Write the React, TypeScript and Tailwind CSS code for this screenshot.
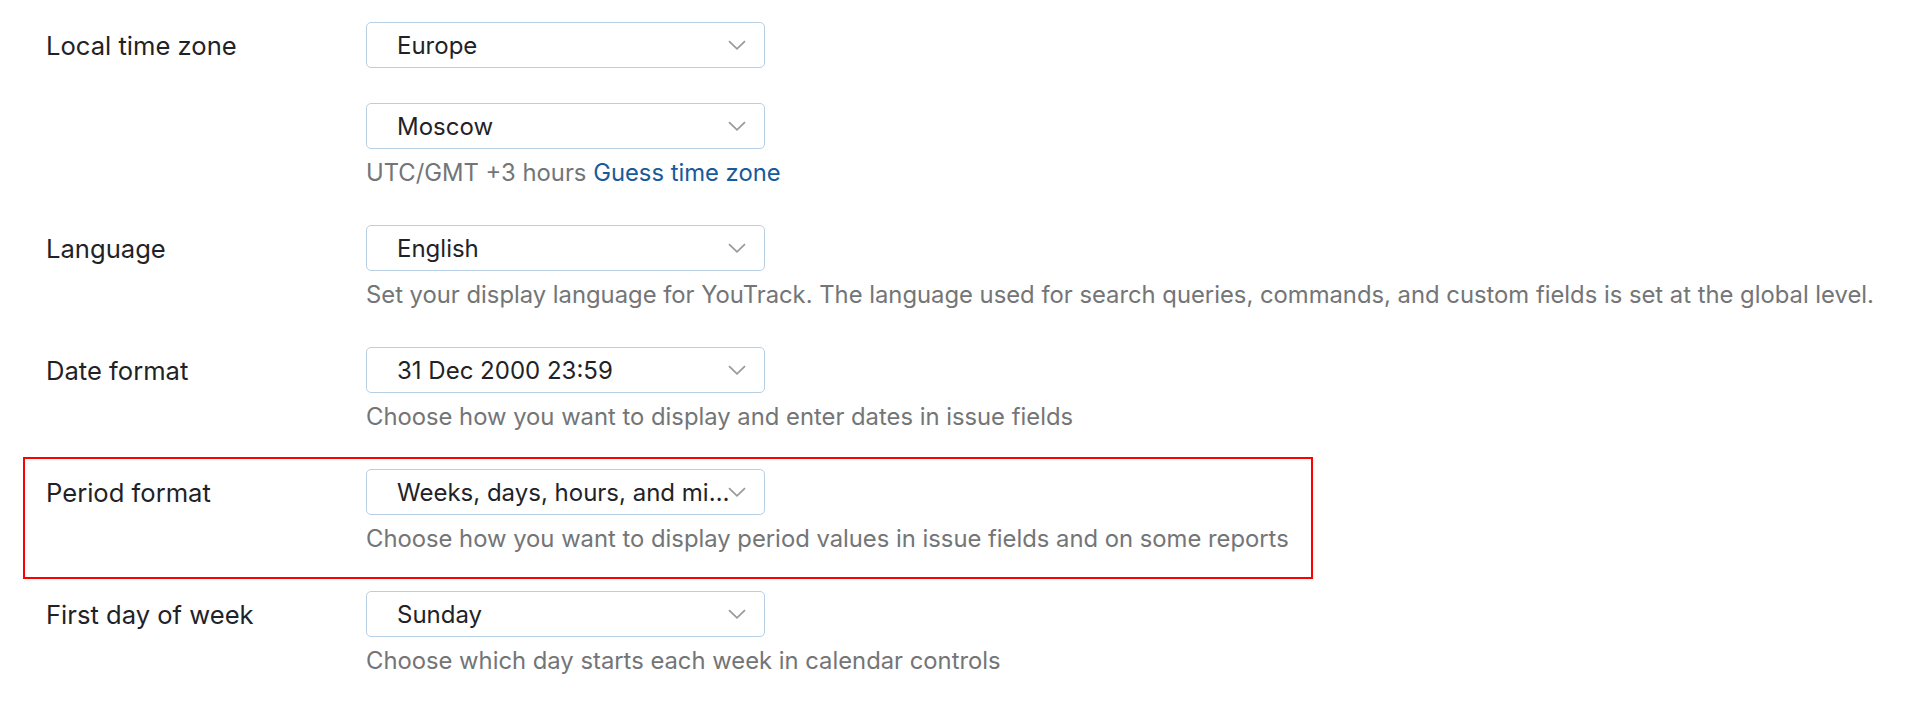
import type { ReactNode } from "react";

// Un selector con chevron a la derecha (estilo YouTrack).
function Select({ value }: { value: string }) {
  return (
    <div className="relative flex h-[46px] w-[399px] items-center rounded-[5px] border-[1.5px] border-[#b7cfe4] bg-white pl-[30px] pr-[34px] pt-[2px] text-[24px] proportional-nums">
      <span className="truncate text-[#1f2328]">{value}</span>
      <svg
        className="absolute right-[18px] top-1/2 -translate-y-1/2"
        width="18"
        height="10"
        viewBox="0 0 18 10"
      >
        <path d="M1 1.2l8 7.6 8-7.6" fill="none" stroke="#999" strokeWidth="1.7" />
      </svg>
    </div>
  );
}

function Row({
  label,
  highlight,
  children,
}: {
  label: string;
  highlight?: boolean;
  children: ReactNode;
}) {
  return (
    <div
      className={`flex w-[1290px] border-2 pb-[18px] pl-[21px] pt-[10px] ${
        highlight ? "border-[#ff0000]" : "border-transparent"
      }`}
    >
      <div className="flex h-[46px] w-[320px] shrink-0 items-center pt-[2px] text-[25.6px] text-[#1f2328]">
        {label}
      </div>
      <div className="flex flex-col">{children}</div>
    </div>
  );
}

function Help({ children }: { children: ReactNode }) {
  return (
    <p className="mt-[4px] whitespace-nowrap text-[23.8px] leading-[40px] text-[#737577]">
      {children}
    </p>
  );
}

export default function App() {
  return (
    <div className="min-h-screen bg-white pl-[23px] pt-[10px] font-['Inter','Noto_Sans',sans-serif] leading-[40px]">
      <Row label="Local time zone">
        <Select value="Europe" />
        <div className="mt-[35px]">
          <Select value="Moscow" />
        </div>
        <Help>
          UTC/GMT +3 hours <span className="text-[#195a9b]">Guess time zone</span>
        </Help>
      </Row>
      <Row label="Language">
        <Select value="English" />
        <Help>
          Set your display language for YouTrack. The language used for search queries, commands,
          and custom fields is set at the global level.
        </Help>
      </Row>
      <Row label="Date format">
        <Select value="31 Dec 2000 23:59" />
        <Help>Choose how you want to display and enter dates in issue fields</Help>
      </Row>
      <Row label="Period format" highlight>
        <Select value="Weeks, days, hours, and minutes" />
        <Help>Choose how you want to display period values in issue fields and on some reports</Help>
      </Row>
      <Row label="First day of week">
        <Select value="Sunday" />
        <Help>Choose which day starts each week in calendar controls</Help>
      </Row>
    </div>
  );
}
